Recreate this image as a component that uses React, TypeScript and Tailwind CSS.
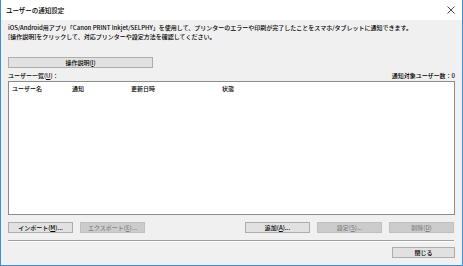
const font = { fontFamily: '"Noto Sans CJK JP", "Noto Sans", sans-serif' };

function Mn({ children }: { children: string }) {
  return <span className="underline underline-offset-1">{children}</span>;
}

function Btn({ children, disabled, w = 'w-[65px]' }: { children: React.ReactNode; disabled?: boolean; w?: string }) {
  return (
    <div
      className={`${w} h-[11px] flex items-center justify-center border text-[6px] leading-none ${
        disabled ? 'bg-[#cccccc] border-[#bfbfbf] text-[#838383]' : 'bg-[#e1e1e1] border-[#adadad] text-black'
      }`}
    >
      {children}
    </div>
  );
}

export default function App() {
  return (
    <div
      className="w-[463px] h-[266px] flex flex-col border-x border-b border-[#3c8fd2] bg-[#f0f0f0] text-black font-medium overflow-hidden"
      style={font}
    >
      {/* Title bar */}
      <div className="h-[20px] bg-white flex items-center justify-between pl-[5px] pr-[6px] shrink-0">
        <span className="text-[6.5px] leading-none">ユーザーの通知設定</span>
        <svg width="8" height="8" viewBox="0 0 8 8" className="mr-[1px]">
          <path d="M0.5 0.5 L7.5 7.5 M7.5 0.5 L0.5 7.5" stroke="#333" strokeWidth="0.9" />
        </svg>
      </div>

      {/* Body */}
      <div className="flex-1 flex flex-col pl-[7px] pr-[6px] pt-[3px]">
        <div className="text-[6px] leading-[9px]">
          <p>iOS/Android用アプリ「Canon PRINT Inkjet/SELPHY」を使用して、プリンターのエラーや印刷が完了したことをスマホ/タブレットに通知できます。</p>
          <p>[操作説明]をクリックして、対応プリンターや設定方法を確認してください。</p>
        </div>

        <div className="mt-[16px]">
          <Btn w="w-[145px]">
            操作説明(<Mn>I</Mn>)
          </Btn>
        </div>

        <div className="mt-[3px] h-[9px] flex items-center justify-between text-[6px] leading-none pr-[1px]">
          <span>
            ユーザー一覧(<Mn>U</Mn>)：
          </span>
          <span>通知対象ユーザー数：0</span>
        </div>

        {/* List */}
        <div className="mt-[1px] h-[134px] w-[447px] bg-white border border-[#8c8c8c]">
          <div className="grid grid-cols-[60px_59px_91px_1fr] text-[6px] leading-none pt-[4px]">
            <span className="pl-[3px]">ユーザー名</span>
            <span className="pl-[3px]">通知</span>
            <span className="pl-[3px]">更新日時</span>
            <span className="pl-[3px]">状態</span>
          </div>
        </div>

        {/* Action buttons */}
        <div className="mt-[7px] flex justify-between w-[446px]">
          <div className="flex gap-[7px]">
            <Btn>
              インポート(<Mn>M</Mn>)...
            </Btn>
            <Btn disabled>
              エクスポート(<Mn>E</Mn>)...
            </Btn>
          </div>
          <div className="flex gap-[7px]">
            <Btn>
              追加(<Mn>A</Mn>)...
            </Btn>
            <Btn disabled>
              設定(<Mn>S</Mn>)...
            </Btn>
            <Btn disabled>
              削除(<Mn>D</Mn>)
            </Btn>
          </div>
        </div>

        <div className="mt-[7px] w-[446px] border-t border-[#a0a0a0] border-b-white border-b h-0" />

        <div className="mt-[5px] w-[447px] flex justify-end">
          <Btn w="w-[63px]">閉じる</Btn>
        </div>
      </div>
    </div>
  );
}
